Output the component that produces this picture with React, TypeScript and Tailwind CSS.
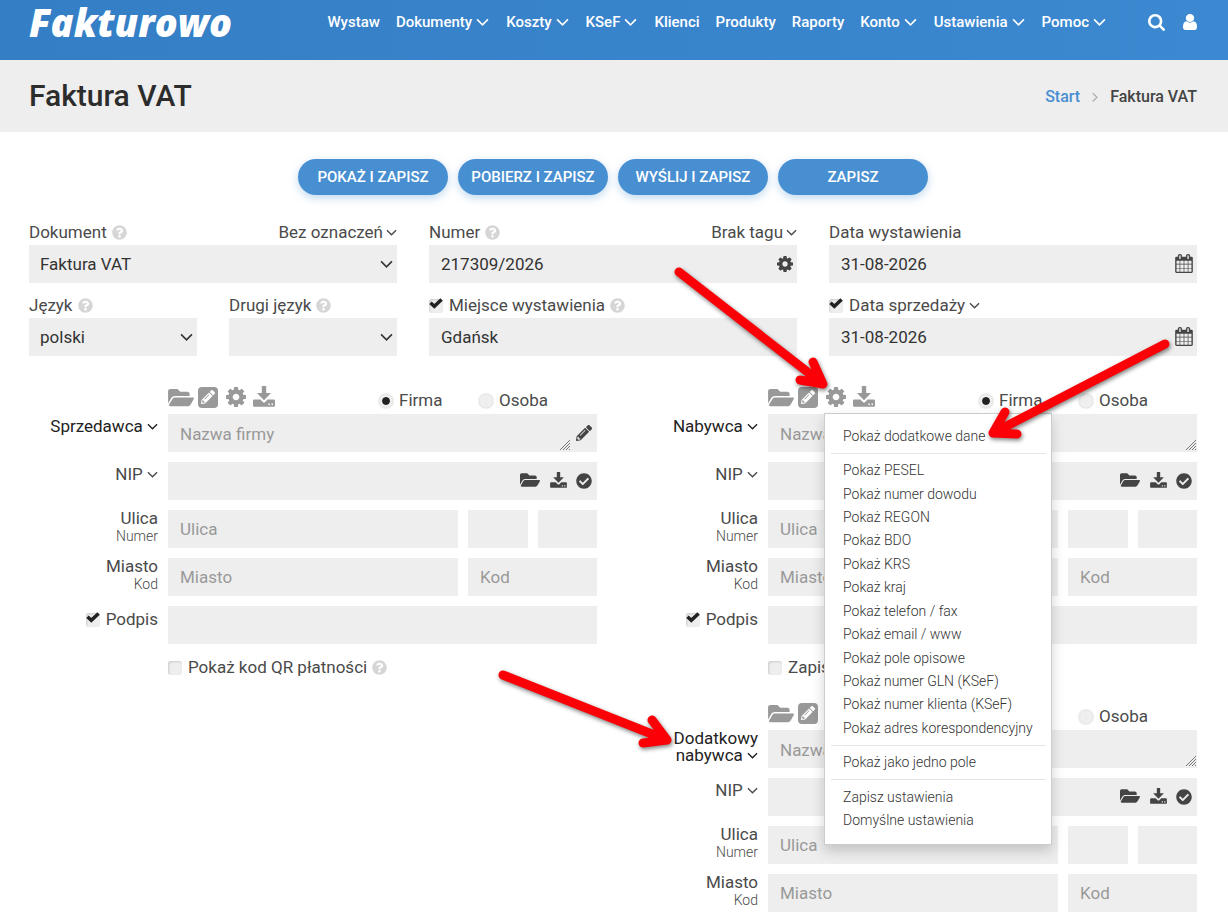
import type { ReactNode } from "react";
import { FaCheckCircle, FaFolderOpen, FaPencilAlt, FaQuestionCircle } from "react-icons/fa";

function Chevron({ className = "w-[11px]" }: { className?: string }) {
  return (
    <svg viewBox="0 0 12 8" fill="none" stroke="currentColor" strokeWidth="1.5" className={`inline-block shrink-0 align-[2px] ${className}`}>
      <path d="M1 1.3 6 6.3 11 1.3" />
    </svg>
  );
}

function Cog({ className }: { className: string }) {
  return (
    <svg viewBox="128 128 1536 1536" fill="currentColor" className={className}>
      <path d="M1152 896q0-106-75-181t-181-75-181 75-75 181 75 181 181 75 181-75 75-181zm512-109v222q0 12-8 23t-20 13l-185 28q-19 54-39 91 35 50 107 138 10 12 10 25t-9 23q-27 37-99 108t-94 71q-12 0-26-9l-138-108q-44 23-91 38-16 136-29 186-7 28-36 28h-222q-14 0-24.5-8.5t-11.5-21.5l-28-184q-49-16-90-37l-141 107q-10 9-25 9-14 0-25-11-126-114-165-168-7-10-7-23 0-12 8-23 15-21 51-66.5t54-70.5q-27-50-41-99l-183-27q-13-2-21-12.5t-8-23.5v-222q0-12 8-23t19-13l186-28q14-46 39-92-40-57-107-138-10-12-10-24 0-10 9-23 26-36 98.5-107.5t94.5-71.5q13 0 26 10l138 107q44-23 91-38 16-136 29-186 7-28 36-28h222q14 0 24.5 8.5t11.5 21.5l28 184q49 16 90 37l142-107q9-9 24-9 13 0 25 10 129 119 165 170 7 8 7 22 0 12-8 23-15 21-51 66.5t-54 70.5q26 50 41 98l183 28q13 2 21 12.5t8 23.5z" />
    </svg>
  );
}

function Download({ className }: { className: string }) {
  return (
    <svg viewBox="0 0 22 21" fill="currentColor" className={className}>
      <path d="M8.8 0h4.400v7h4.800L11 14.200 4 7h4.800z" />
      <path
        fillRule="evenodd"
        d="M1.200 13.600h6.200l2.400 2.400q1.200 1 2.400 0l2.400-2.400h6.200q1.200 0 1.200 1.200v4.800q0 1.200-1.200 1.200H1.200Q0 20.800 0 19.600v-4.800q0-1.200 1.200-1.200zM15.300 17.500v1.500h1.500v-1.500zM18.500 17.500v1.500H20v-1.500z"
      />
    </svg>
  );
}

function Calendar() {
  return (
    <svg viewBox="64 0 1664 1792" fill="currentColor" className="h-[19px] w-[18px]">
      <path d="M192 1664h288v-288h-288v288zm352 0h320v-288h-320v288zm-352-352h288v-320h-288v320zm352 0h320v-320h-320v320zm-352-384h288v-288h-288v288zm736 736h320v-288h-320v288zm-384-736h320v-288h-320v288zm768 736h288v-288h-288v288zm-384-352h320v-320h-320v320zm-352-864v-288q0-13-9.500-22.500t-22.500-9.500h-64q-13 0-22.500 9.500t-9.500 22.500v288q0 13 9.500 22.500t22.500 9.500h64q13 0 22.500-9.500t9.500-22.500zm736 864h288v-320h-288v320zm-384-384h320v-288h-320v288zm384 0h288v-288h-288v288zm32-480v-288q0-13-9.500-22.500t-22.500-9.500h-64q-13 0-22.500 9.500t-9.500 22.500v288q0 13 9.500 22.500t22.500 9.500h64q13 0 22.500-9.500t9.500-22.500zm384-64v1280q0 52-38 90t-90 38h-1408q-52 0-90-38t-38-90v-1280q0-52 38-90t90-38h128v-96q0-66 47-113t113-47h64q66 0 113 47t47 113v96h384v-96q0-66 47-113t113-47h64q66 0 113 47t47 113v96h128q52 0 90 38t38 90z" />
    </svg>
  );
}

function Help() {
  return <FaQuestionCircle className="-mt-px -ml-px size-[15px] shrink-0 text-[#d6d6d6]" />;
}

function Check({ id, checked = false, label }: { id: string; checked?: boolean; label?: string }) {
  return (
    <span className="relative inline-flex shrink-0">
      <input
        id={id}
        type="checkbox"
        defaultChecked={checked}
        aria-label={label}
        className="peer size-[14px] appearance-none rounded-[3px] bg-[#eee] shadow-[inset_1px_1px_2px_#ccc]"
      />
      <svg viewBox="0 0 14 11" className="pointer-events-none absolute -top-px left-0 hidden h-[11px] w-[14px] peer-checked:block">
        <path d="M1.500 4.800 5.300 8.300 12.600 1.500" fill="none" stroke="#222" strokeWidth="3.500" />
      </svg>
    </span>
  );
}

function Radio({ name, label, checked = false }: { name: string; label: string; checked?: boolean }) {
  return (
    <label className="flex w-[100px] items-center gap-[6px]">
      <input
        type="radio"
        name={name}
        defaultChecked={checked}
        className="size-[14px] appearance-none rounded-full border-[3px] border-[#eee] bg-[#eee] bg-clip-padding shadow-[0_0_2px_#bbb] checked:bg-[#222]"
      />
      {label}
    </label>
  );
}

const field = "h-[38px] w-full min-w-0 bg-[#eee] px-3 text-[#333] outline-none placeholder:text-[#999]";

function Select({ id, options }: { id: string; options: string[] }) {
  return (
    <div className="relative">
      <select id={id} className="block h-[38px] w-full appearance-none bg-[#eee] px-[11px] pt-px text-[#333]">
        {options.map((o) => (
          <option key={o}>{o}</option>
        ))}
      </select>
      <Chevron className="pointer-events-none absolute top-[15px] right-[4px] w-[13px] text-[#333]" />
    </div>
  );
}

function IconInput({ id, value, icon, action }: { id: string; value: string; icon: ReactNode; action: string }) {
  return (
    <div className="flex bg-[#eee]">
      <input id={id} defaultValue={value} className={field} />
      <button aria-label={action} className="flex shrink-0 items-center pr-[4px] pb-px text-[#444]">
        {icon}
      </button>
    </div>
  );
}

function Row({ label, children }: { label: ReactNode; children: ReactNode }) {
  return (
    <div className="flex gap-[10px]">
      <div className="w-[129px] shrink-0 text-right leading-[17px]">{label}</div>
      <div className="flex min-w-0 flex-1 gap-[10px]">{children}</div>
    </div>
  );
}

const extraData = [
  "Pokaż PESEL",
  "Pokaż numer dowodu",
  "Pokaż REGON",
  "Pokaż BDO",
  "Pokaż KRS",
  "Pokaż kraj",
  "Pokaż telefon / fax",
  "Pokaż email / www",
  "Pokaż pole opisowe",
  "Pokaż numer GLN (KSeF)",
  "Pokaż numer klienta (KSeF)",
  "Pokaż adres korespondencyjny",
];

function MenuGroup({ items, className = "" }: { items: string[]; className?: string }) {
  return (
    <ul className={`grid auto-rows-fr ${className}`}>
      {items.map((item) => (
        <li key={item} className="flex items-center px-3">
          <button className="whitespace-nowrap">{item}</button>
        </li>
      ))}
    </ul>
  );
}

function Menu() {
  return (
    <div className="absolute top-full -left-[2px] z-10 mt-[6px] w-[228px] border border-[#ccc] bg-white pt-[10px] pr-[5px] pb-3 pl-[6px] text-[14px] leading-[23px] font-light text-[#333] shadow-[0_6px_12px_rgba(0,0,0,0.18)]">
      <MenuGroup items={["Pokaż dodatkowe dane"]} className="leading-6" />
      <hr className="my-[5px] border-[#e5e5e5]" />
      <MenuGroup items={extraData} className="h-[281px]" />
      <hr className="my-[5px] border-[#e5e5e5]" />
      <MenuGroup items={["Pokaż jako jedno pole"]} />
      <hr className="mt-[5px] mb-[6px] border-[#e5e5e5]" />
      <MenuGroup items={["Zapisz ustawienia", "Domyślne ustawienia"]} />
    </div>
  );
}

type PartyProps = { id: string; title: ReactNode; editable?: boolean; menu?: boolean; signature?: boolean };

function Party({ id, title, editable = false, menu = false, signature = true }: PartyProps) {
  return (
    <section className="flex flex-col gap-[10px]">
      <div className="-mb-[10px] flex h-8 items-center pb-[2px] pl-[139px] text-[#999]">
        <button aria-label="Wybierz" className="w-[30px]">
          <FaFolderOpen className="h-[23px] w-[26px]" />
        </button>
        <button aria-label="Edytuj" className="mr-2 flex h-[21px] w-5 items-center justify-center rounded-[4px] bg-[#999] text-white">
          <FaPencilAlt className="size-[14px]" />
        </button>
        <div className="relative w-[27px]">
          <button aria-label="Ustawienia" className="block">
            <Cog className="size-5" />
          </button>
          {menu && <Menu />}
        </div>
        <button aria-label="Pobierz" className="pb-[2px]">
          <Download className="h-[21px] w-[22px]" />
        </button>
        <div className="ml-auto flex pt-[7px] pr-[18px] text-[#4a4a4a]">
          <Radio name={`${id}-type`} label="Firma" checked={id !== "extra"} />
          <Radio name={`${id}-type`} label="Osoba" />
        </div>
      </div>

      <Row label={<label htmlFor={`${id}-name`} className="text-[#222]">{title}</label>}>
        <div className="flex w-full bg-[#eee]">
          <div className="relative min-w-0 flex-1">
            <textarea
              id={`${id}-name`}
              rows={1}
              placeholder="Nazwa firmy"
              className="block h-[38px] w-full resize-y overflow-hidden px-3 py-[10px] leading-5 outline-none placeholder:text-[#999] [&::-webkit-resizer]:hidden"
            />
            <svg viewBox="0 0 10 10" stroke="#777" className="pointer-events-none absolute right-[1px] bottom-[2px] size-[10px]">
              <path d="M0 10 10 0M3 10l7-7M6 10l4-4M9 10l1-1" />
            </svg>
          </div>
          {editable && (
            <button aria-label="Edytuj nazwę" className="shrink-0 px-[5px] text-[#444]">
              <FaPencilAlt className="size-4" />
            </button>
          )}
        </div>
      </Row>
      <Row label={<label htmlFor={`${id}-nip`} className="block pt-[4px]">NIP <Chevron /></label>}>
        <div className="flex w-full bg-[#eee] pr-[5px] text-[#444]">
          <input id={`${id}-nip`} className={field} />
          <button aria-label="Wybierz z listy" className="mr-[10px] pb-[2px]">
            <FaFolderOpen className="h-[18px] w-5" />
          </button>
          <button aria-label="Pobierz dane" className="mr-[9px] pb-[2px]">
            <Download className="h-4 w-[17px]" />
          </button>
          <button aria-label="Sprawdź">
            <FaCheckCircle className="size-4" />
          </button>
        </div>
      </Row>
      <Row
        label={
          <>
            <label htmlFor={`${id}-street`} className="block">Ulica</label>
            <label htmlFor={`${id}-house`} className="block pt-px text-[14px] font-light">Numer</label>
          </>
        }
      >
        <input id={`${id}-street`} placeholder="Ulica" className={`${field} flex-1`} />
        <div className="flex w-[129px] gap-[10px]">
          <input id={`${id}-house`} className={field} />
          <input aria-label="Numer lokalu" className={field} />
        </div>
      </Row>
      <Row
        label={
          <>
            <label htmlFor={`${id}-city`} className="block">Miasto</label>
            <label htmlFor={`${id}-zip`} className="block pt-px text-[14px] font-light">Kod</label>
          </>
        }
      >
        <input id={`${id}-city`} placeholder="Miasto" className={`${field} flex-1`} />
        <div className="w-[129px]">
          <input id={`${id}-zip`} placeholder="Kod" className={field} />
        </div>
      </Row>
      {signature && (
        <Row
          label={
            <label htmlFor={`${id}-sign`} className="flex items-center justify-end gap-[6px] pt-[5px]">
              <Check id={`${id}-sign-on`} checked label="Włącz podpis" />
              Podpis
            </label>
          }
        >
          <input id={`${id}-sign`} className={field} />
        </Row>
      )}
    </section>
  );
}

const nav = [
  { label: "Wystaw" },
  { label: "Dokumenty", sub: true },
  { label: "Koszty", sub: true },
  { label: "KSeF", sub: true },
  { label: "Klienci" },
  { label: "Produkty" },
  { label: "Raporty" },
  { label: "Konto", sub: true },
  { label: "Ustawienia", sub: true },
  { label: "Pomoc", sub: true },
];

const actions = ["Pokaż i zapisz", "Pobierz i zapisz", "Wyślij i zapisz", "Zapisz"];

// shaft end, tip and both barbs of every pointer
const arrows = [
  "M679 272 823 384M813 362 823 384 800 380",
  "M1165 344 993 433M1005 412 993 433 1017 434",
  "M503 675 667 740M652 720 667 740 643 743",
];

const labelRow = "flex h-[26px] items-center gap-[6px] pt-[2px]";

export default function App() {
  return (
    <div className="relative min-h-screen bg-white font-[Roboto,sans-serif] text-[17px] text-[#4a4a4a]">
      <header className="flex h-[60px] items-start justify-between bg-linear-to-r from-[#347ec5] to-[#3c89d1] pr-[31px] pl-[29px] text-white">
        <a href="#" className="font-['Open_Sans',sans-serif] text-[38px] leading-[44px] font-extrabold italic">
          Fakturowo
        </a>
        <div className="flex h-11 items-center">
          <nav className="flex gap-[16px] text-[15px] font-medium">
            {nav.map((n) => (
              <a key={n.label} href="#" className="flex items-center gap-[4px]">
                {n.label}
                {n.sub && <Chevron className="mr-px w-[13px]" />}
              </a>
            ))}
          </nav>
          <button aria-label="Szukaj" className="ml-[41px]">
            <svg viewBox="64 128 1664 1664" fill="currentColor" className="size-[17px]">
              <path d="M1216 832q0-185-131.500-316.500t-316.500-131.500-316.500 131.500-131.500 316.500 131.500 316.500 316.500 131.500 316.500-131.500 131.500-316.500zm512 832q0 52-38 90t-90 38q-54 0-90-38l-343-342q-179 124-399 124-143 0-273.500-55.500t-225-150-150-225-55.500-273.500 55.500-273.500 150-225 225-150 273.500-55.500 273.500 55.500 225 150 150 225 55.500 273.500q0 220-124 399l343 343q37 37 37 90z" />
            </svg>
          </button>
          <button aria-label="Konto użytkownika" className="ml-[18px]">
            <svg viewBox="0 128 1280 1536" preserveAspectRatio="none" fill="currentColor" className="h-4 w-[14px]">
              <path d="M1280 1399q0 109-62.500 187t-150.500 78h-854q-88 0-150.500-78t-62.500-187q0-85 8.500-160.500t31.500-152 58.500-131 94-89 134.500-34.500q131 128 313 128t313-128q76 0 134.500 34.500t94 89 58.500 131 31.500 152 8.500 160.500zm-256-887q0 159-112.500 271.500t-271.500 112.500-271.500-112.500-112.500-271.500 112.500-271.500 271.500-112.500 271.500 112.500 112.500 271.500z" />
            </svg>
          </button>
        </div>
      </header>

      <div className="flex h-[72px] items-center justify-between bg-[#eee] pr-[31px] pl-[29px]">
        <h1 className="text-[30px] leading-[42px] font-medium text-[#2c2c2c]">Faktura VAT</h1>
        <nav className="flex items-center gap-[10px] pt-[2px] text-[16px] font-medium">
          <a href="#" className="text-[#488fd2]">Start</a>
          <Chevron className="w-[10px] -rotate-90 text-[#aaa]" />
          <span className="text-[#444]">Faktura VAT</span>
        </nav>
      </div>

      <main className="pt-[27px] pr-[31px] pb-[11px] pl-[29px]">
        <div className="flex justify-center gap-[10px]">
          {actions.map((a) => (
            <button
              key={a}
              className="h-9 w-[150px] rounded-full bg-[#488fd1] text-[15px] font-medium text-white uppercase shadow-[0_3px_8px_rgba(72,143,209,0.35)]"
            >
              {a}
            </button>
          ))}
        </div>

        <div className="mt-6 grid grid-cols-3 gap-x-8 gap-y-[9px]">
          <div>
            <div className={labelRow}>
              <label htmlFor="doc">Dokument</label>
              <Help />
              <button className="ml-auto flex items-center gap-[3px]">
                Bez oznaczeń <Chevron />
              </button>
            </div>
            <Select id="doc" options={["Faktura VAT"]} />
          </div>
          <div>
            <div className={labelRow}>
              <label htmlFor="number">Numer</label>
              <Help />
              <button className="ml-auto flex items-center gap-[3px]">
                Brak tagu <Chevron />
              </button>
            </div>
            <IconInput id="number" value="217309/2026" action="Numeracja" icon={<Cog className="size-4" />} />
          </div>
          <div>
            <div className={labelRow}>
              <label htmlFor="issued">Data wystawienia</label>
            </div>
            <IconInput id="issued" value="31-08-2026" action="Wybierz datę wystawienia" icon={<Calendar />} />
          </div>
          <div className="grid grid-cols-2 gap-8">
            <div>
              <div className={labelRow}>
                <label htmlFor="lang">Język</label>
                <Help />
              </div>
              <Select id="lang" options={["polski"]} />
            </div>
            <div>
              <div className={labelRow}>
                <label htmlFor="lang2">Drugi język</label>
                <Help />
              </div>
              <Select id="lang2" options={[""]} />
            </div>
          </div>
          <div>
            <div className={labelRow}>
              <Check id="place-on" checked label="Pokaż miejsce wystawienia" />
              <label htmlFor="place">Miejsce wystawienia</label>
              <Help />
            </div>
            <input id="place" defaultValue="Gdańsk" className={field} />
          </div>
          <div>
            <div className={labelRow}>
              <Check id="sold-on" checked label="Pokaż datę sprzedaży" />
              <label htmlFor="sold">Data sprzedaży</label>
              <Chevron className="-ml-[2px] w-[11px]" />
            </div>
            <IconInput id="sold" value="31-08-2026" action="Wybierz datę sprzedaży" icon={<Calendar />} />
          </div>
        </div>

        <div className="mt-[26px] grid grid-cols-2 gap-8">
          <div>
            <Party id="seller" editable title={<span className="block pt-[4px]">Sprzedawca <Chevron /></span>} />
            <div className="mt-[11px] flex h-[26px] items-center gap-[6px] pl-[139px]">
              <Check id="qr" />
              <label htmlFor="qr">Pokaż kod QR płatności</label>
              <Help />
            </div>
          </div>
          <div>
            <Party id="buyer" menu title={<span className="block pt-[4px]">Nabywca <Chevron /></span>} />
            <div className="mt-[11px] mb-[17px] flex h-[26px] items-center gap-[6px] pl-[139px]">
              <Check id="save" />
              <label htmlFor="save">Zapisz</label>
            </div>
            <Party id="extra" signature={false} title={<span>Dodatkowy<br />nabywca <Chevron /></span>} />
          </div>
        </div>
      </main>

      <svg
        width="1228"
        height="923"
        fill="none"
        stroke="#fb0007"
        strokeWidth="9"
        strokeLinecap="round"
        strokeLinejoin="round"
        className="pointer-events-none absolute top-0 left-0 z-20 max-w-none drop-shadow-[1px_2px_2px_rgba(0,0,0,0.5)]"
      >
        {arrows.map((d) => (
          <path key={d} d={d} />
        ))}
      </svg>
    </div>
  );
}
